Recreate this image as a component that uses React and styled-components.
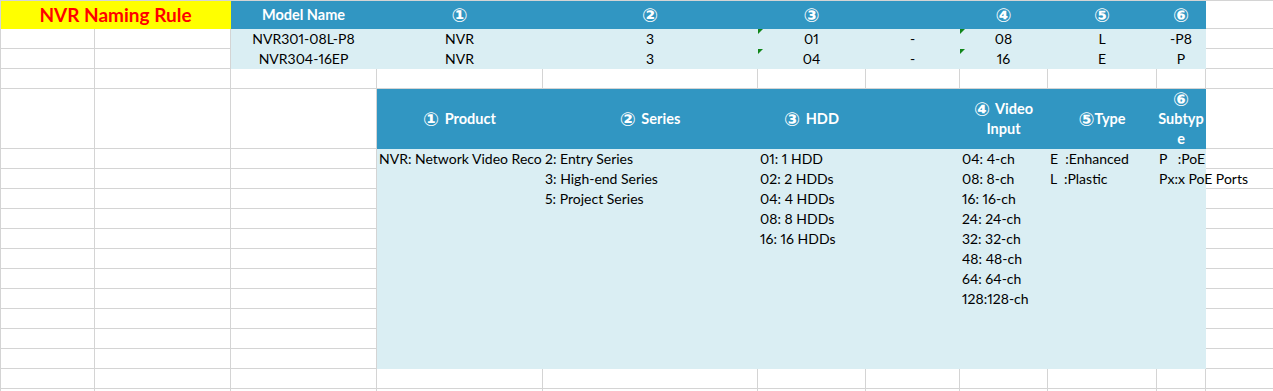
import React from "react";
import styled, { createGlobalStyle } from "styled-components";

const GRID = "#d4d4d4";
const HEAD = "#3196c2";
const PALE = "#daeef3";

const GlobalStyle = createGlobalStyle`
  html, body {
    margin: 0;
    padding: 0;
    background: #fff;
  }
  body {
    font-family: "Lato", "DejaVu Sans", sans-serif;
    font-size: 14px;
    font-feature-settings: "pnum";
    color: #000;
    overflow: hidden;
  }
`;

const Sheet = styled.div`
  display: grid;
  grid-template-columns: 94px 136px 146px 166px 215px 108px 94px 88px 109px 49px 68px;
  grid-template-rows: 28px 20px 20px 20px 60px repeat(13, 20px);
  width: max-content;
  border-top: 1px solid ${GRID};
  border-left: 1px solid ${GRID};
`;

const Cell = styled.div`
  box-sizing: border-box;
  position: relative;
  display: flex;
  align-items: center;
  justify-content: center;
  padding: 0 2px;
  line-height: 20px;
  text-align: center;
  white-space: pre;
  grid-column: span ${({ $span }) => $span || 1};
  grid-row: span ${({ $rows }) => $rows || 1};
  background: ${({ $fill }) => $fill || "transparent"};
  border-right: 1px solid ${({ $fill }) => $fill || GRID};
  border-bottom: 1px solid ${({ $fill }) => $fill || GRID};

  ${({ $flag }) =>
    $flag &&
    `
    &::before {
      content: "";
      position: absolute;
      top: 0;
      left: 0;
      border-top: 5px solid #11861a;
      border-right: 5px solid transparent;
    }
  `}
`;

const Title = styled(Cell)`
  background: #ffff00;
  border-color: #ffff00;
  color: #ff0000;
  font-weight: 700;
  font-size: 19px;
`;

const Head = styled(Cell)`
  background: ${HEAD};
  border-color: ${HEAD};
  color: #fff;
  font-weight: 700;
  font-size: 14.5px;
`;

const Num = styled.span`
  display: inline-block;
  vertical-align: top;
  font-family: "DejaVu Sans", sans-serif;
  font-weight: 700;
  font-size: 19px;
  line-height: 20px;
  margin-right: ${({ $gap }) => ($gap ? "2px" : "0")};
`;

const List = styled(Cell)`
  flex-direction: column;
  align-items: stretch;
  justify-content: flex-start;
  text-align: left;
  overflow: ${({ $clip }) => ($clip ? "hidden" : "visible")};
`;

const Line = styled.div`
  height: 20px;
  line-height: 20px;
`;

const models = [
  ["NVR301-08L-P8", "NVR", "3", "01", "-", "08", "L", "-P8"],
  ["NVR304-16EP", "NVR", "3", "04", "-", "16", "E", "P"],
];

const topHeads = [
  { text: "Model Name" },
  { num: "①" },
  { num: "②" },
  { num: "③" },
  {},
  { num: "④" },
  { num: "⑤" },
  { num: "⑥" },
];

const ruleHeads = [
  { num: "①", text: " Product" },
  { num: "②", text: " Series" },
  { num: "③", text: " HDD" },
  {},
  { num: "④", text: " Video\nInput" },
  { num: "⑤", text: "Type" },
  { num: "⑥", text: "\nSubtyp\ne" },
];

const rules = [
  { lines: ["NVR: Network Video Recorder"], clip: true },
  { lines: ["2: Entry Series", "3: High-end Series", "5: Project Series"] },
  { lines: ["01: 1 HDD", "02: 2 HDDs", "04: 4 HDDs", "08: 8 HDDs", "16: 16 HDDs"] },
  { lines: [] },
  {
    lines: [
      "04: 4-ch",
      "08: 8-ch",
      "16: 16-ch",
      "24: 24-ch",
      "32: 32-ch",
      "48: 48-ch",
      "64: 64-ch",
      "128:128-ch",
    ],
  },
  { lines: ["E  :Enhanced", "L  :Plastic"] },
  { lines: ["P   :PoE", "Px:x PoE Ports"] },
];

const blanks = (prefix, n) =>
  Array.from({ length: n }, (_, i) => <Cell key={`${prefix}-${i}`} />);

const HeadCell = ({ num, text }) => (
  <Head>
    <div>
      {num && <Num $gap={text && text.startsWith(" ")}>{num}</Num>}
      {text}
    </div>
  </Head>
);

const App = () => {
  return (
    <>
      <GlobalStyle />
      <Sheet>
        <Title $span={2}>NVR Naming Rule</Title>
        {topHeads.map((head, i) => (
          <HeadCell key={`th-${i}`} {...head} />
        ))}
        <Cell />

        {models.map((row, r) => (
          <React.Fragment key={row[0]}>
            {blanks(`m${r}a`, 2)}
            {row.map((value, i) => (
              <Cell key={i} $fill={PALE} $flag={i === 3 || i === 5}>
                {value}
              </Cell>
            ))}
            <Cell />
          </React.Fragment>
        ))}

        {blanks("gap", 11)}

        {blanks("rh", 3)}
        {ruleHeads.map((head, i) => (
          <HeadCell key={`rh-${i}`} {...head} />
        ))}
        <Cell />

        {blanks("r6", 3)}
        {rules.map((col, i) => (
          <List key={`rule-${i}`} $fill={PALE} $rows={11} $clip={col.clip}>
            {col.lines.map((line) => (
              <Line key={line}>{line}</Line>
            ))}
          </List>
        ))}
        <Cell />
        {Array.from({ length: 10 }, (_, r) => (
          <React.Fragment key={`side-${r}`}>{blanks(`s${r}`, 4)}</React.Fragment>
        ))}

        {blanks("tail", 22)}
      </Sheet>
    </>
  );
};

export default App;
